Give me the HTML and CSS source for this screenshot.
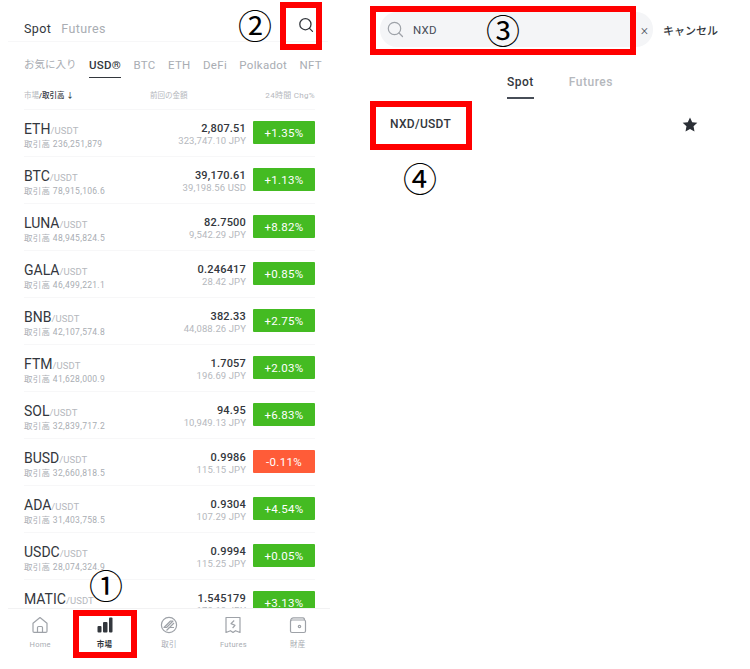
FILE: index.html
```html
<!DOCTYPE html>
<html lang="ja">
<head>
    <meta charset="UTF-8">
    <meta name="viewport" content="width=device-width, initial-scale=1.0">
    <title>NXD/USDT</title>
    <link rel="stylesheet" href="styles.css">
</head>
<body>

<div class="page">
    <!-- left screen: market list -->
    <div class="market">
        <div class="market-top">
            <span class="top-tab active">Spot</span>
            <span class="top-tab">Futures</span>
            <svg class="top-search" width="16" height="16" viewBox="0 0 16 16" fill="none" stroke="#33373d" stroke-width="1.3">
                <circle cx="7.4" cy="7.2" r="5.6"/>
                <path d="M11.5 11.4l3 3" stroke-linecap="round"/>
            </svg>
        </div>

        <div class="cats">
            <span class="fav">お気に入り</span>
            <span class="active">USD®</span>
            <span>BTC</span>
            <span>ETH</span>
            <span>DeFi</span>
            <span>Polkadot</span>
            <span>NFT</span>
        </div>

        <div class="table-head">
            <span class="col-market">市場<b>/取引高 ↓</b></span>
            <span class="col-last">前回の金額</span>
            <span class="col-chg">24時間 Chg%</span>
        </div>

        <div class="rows">
            <div class="row">
                <div class="pair"><div class="name">ETH<small>/USDT</small></div><div class="vol">取引高 236,251,879</div></div>
                <div class="price"><div class="last">2,807.51</div><div class="conv">323,747.10 JPY</div></div>
                <div class="chg">+1.35%</div>
            </div>
            <div class="row">
                <div class="pair"><div class="name">BTC<small>/USDT</small></div><div class="vol">取引高 78,915,106.6</div></div>
                <div class="price"><div class="last">39,170.61</div><div class="conv">39,198.56 USD</div></div>
                <div class="chg">+1.13%</div>
            </div>
            <div class="row">
                <div class="pair"><div class="name">LUNA<small>/USDT</small></div><div class="vol">取引高 48,945,824.5</div></div>
                <div class="price"><div class="last">82.7500</div><div class="conv">9,542.29 JPY</div></div>
                <div class="chg">+8.82%</div>
            </div>
            <div class="row">
                <div class="pair"><div class="name">GALA<small>/USDT</small></div><div class="vol">取引高 46,499,221.1</div></div>
                <div class="price"><div class="last">0.246417</div><div class="conv">28.42 JPY</div></div>
                <div class="chg">+0.85%</div>
            </div>
            <div class="row">
                <div class="pair"><div class="name">BNB<small>/USDT</small></div><div class="vol">取引高 42,107,574.8</div></div>
                <div class="price"><div class="last">382.33</div><div class="conv">44,088.26 JPY</div></div>
                <div class="chg">+2.75%</div>
            </div>
            <div class="row">
                <div class="pair"><div class="name">FTM<small>/USDT</small></div><div class="vol">取引高 41,628,000.9</div></div>
                <div class="price"><div class="last">1.7057</div><div class="conv">196.69 JPY</div></div>
                <div class="chg">+2.03%</div>
            </div>
            <div class="row">
                <div class="pair"><div class="name">SOL<small>/USDT</small></div><div class="vol">取引高 32,839,717.2</div></div>
                <div class="price"><div class="last">94.95</div><div class="conv">10,949.13 JPY</div></div>
                <div class="chg">+6.83%</div>
            </div>
            <div class="row">
                <div class="pair"><div class="name">BUSD<small>/USDT</small></div><div class="vol">取引高 32,660,818.5</div></div>
                <div class="price"><div class="last">0.9986</div><div class="conv">115.15 JPY</div></div>
                <div class="chg down">-0.11%</div>
            </div>
            <div class="row">
                <div class="pair"><div class="name">ADA<small>/USDT</small></div><div class="vol">取引高 31,403,758.5</div></div>
                <div class="price"><div class="last">0.9304</div><div class="conv">107.29 JPY</div></div>
                <div class="chg">+4.54%</div>
            </div>
            <div class="row">
                <div class="pair"><div class="name">USDC<small>/USDT</small></div><div class="vol">取引高 28,074,324.9</div></div>
                <div class="price"><div class="last">0.9994</div><div class="conv">115.25 JPY</div></div>
                <div class="chg">+0.05%</div>
            </div>
            <div class="row">
                <div class="pair"><div class="name">MATIC<small>/USDT</small></div><div class="vol">取引高 19,115,421.1</div></div>
                <div class="price"><div class="last">1.545179</div><div class="conv">178.18 JPY</div></div>
                <div class="chg">+3.13%</div>
            </div>
        </div>

        <div class="bottom-nav">
            <div class="nav-item">
                <svg width="18" height="18" viewBox="0 0 18 18" fill="none" stroke="#9ea2a8" stroke-width="1.2" stroke-linejoin="round">
                    <path d="M2 7.2L9 1.500l7 5.700v8a1.200 1.200 0 0 1-1.200 1.200H3.200A1.200 1.200 0 0 1 2 15.200z"/>
                    <path d="M6.500 16.400v-4.900a1 1 0 0 1 1-1h3a1 1 0 0 1 1 1v4.900"/>
                </svg>
                <span>Home</span>
            </div>
            <div class="nav-item active">
                <svg width="18" height="18" viewBox="0 0 18 18" fill="#33373d">
                    <rect x="1.500" y="10" width="4" height="6.500" rx="1"/>
                    <rect x="7" y="6" width="4.500" height="10.500" rx="1"/>
                    <rect x="13" y="1.500" width="3.500" height="15" rx="1"/>
                </svg>
                <span>市場</span>
            </div>
            <div class="nav-item">
                <svg width="18" height="18" viewBox="0 0 18 18" fill="none" stroke="#9ea2a8" stroke-width="1.200">
                    <circle cx="9" cy="9" r="7.600"/>
                    <path d="M4 11.500L10.500 5H13L6.500 11.500zM6.500 14.500l7.500-7.500M8.500 11.500H14" stroke-linejoin="round"/>
                </svg>
                <span>取引</span>
            </div>
            <div class="nav-item">
                <svg width="18" height="18" viewBox="0 0 18 18" fill="none" stroke="#9ea2a8" stroke-width="1.200" stroke-linejoin="round">
                    <path d="M2 1.500h14v15l-4.500-1.800L9 16.500l-2.500-1.800L2 16.500z"/>
                    <path d="M10.200 4.500L7 7.600l4 1.700-2.400 2.700"/>
                </svg>
                <span>Futures</span>
            </div>
            <div class="nav-item">
                <svg width="18" height="18" viewBox="0 0 18 18" fill="none" stroke="#9ea2a8" stroke-width="1.200" stroke-linejoin="round">
                    <rect x="1.500" y="4" width="15" height="12.500" rx="1.500"/>
                    <path d="M1.500 5.500C1.500 3 3 1.800 4.500 1.800h9.500c1 0 1.500.8 1.500 2.200"/>
                    <circle cx="10.500" cy="10.500" r="1.200"/>
                </svg>
                <span>財産</span>
            </div>
        </div>
    </div>

    <!-- right screen: search result -->
    <div class="search">
        <div class="search-top">
            <div class="search-box">
                <svg width="17" height="17" viewBox="0 0 17 17" fill="none" stroke="#9ea2a8" stroke-width="1.2">
                    <circle cx="7.500" cy="7.500" r="6.200"/>
                    <path d="M12 12l3.500 3.500" stroke-linecap="round"/>
                </svg>
                <span class="query">NXD</span>
                <span class="clear">×</span>
            </div>
            <span class="cancel">キャンセル</span>
        </div>
        <div class="search-tabs">
            <span class="active">Spot</span>
            <span>Futures</span>
        </div>
        <div class="result">
            <span class="result-name">NXD/USDT</span>
            <svg width="16" height="15" viewBox="0 0 18 17" fill="#2b2f36">
                <path d="M9 .6l2.500 5.300 5.800.7-4.300 4 1.100 5.700L9 13.500l-5.100 2.800L5 10.600.7 6.600l5.800-.7z"/>
            </svg>
        </div>
    </div>

    <!-- annotations drawn over the screenshots -->
    <div class="mark mark-nav"></div>
    <div class="mark mark-icon"></div>
    <div class="mark mark-box"></div>
    <div class="mark mark-result"></div>
    <div class="num num-1">①</div>
    <div class="num num-2">②</div>
    <div class="num num-3">③</div>
    <div class="num num-4">④</div>
</div>

</body>
</html>
```

FILE: styles.css
```css
* {
    box-sizing: border-box;
}

body {
    margin: 0;
    background-color: #fff;
    font-family: Roboto, "Noto Sans CJK JP", sans-serif;
    color: #2b2f36;
}

.page {
    position: relative;
    display: flex;
    width: 750px;
    height: 669px;
    overflow: hidden;
}

/* Left screen */
.market {
    display: flex;
    flex-direction: column;
    width: 330px;
    height: 660px;
}

.market-top {
    display: flex;
    align-items: center;
    gap: 10px;
    height: 42px;
    margin: 0 2px 0 8px;
    padding: 16px 14px 0 16px;
    border-bottom: 1px solid #f7f7f8;
    flex-shrink: 0;
}

.top-tab {
    font-size: 12.500px;
    letter-spacing: .4px;
    color: #a9adb3;
}

.top-tab.active {
    color: #33373d;
}

.top-search {
    margin: -8px 0 0 auto;
}

.cats {
    display: flex;
    justify-content: space-between;
    height: 30px;
    margin-top: 13px;
    padding: 0 8px 0 24px;
    font-size: 11.500px;
    letter-spacing: .3px;
    color: #a9adb3;
    flex-shrink: 0;
}

.cats span {
    height: 23px;
    line-height: 20px;
}

.cats .fav {
    font-size: 10.500px;
    letter-spacing: 0;
}

.cats .active {
    font-weight: 500;
    color: #33373d;
    border-bottom: 1px solid #33373d;
}

.table-head {
    display: flex;
    align-items: center;
    height: 25px;
    margin: 0 15px 0 24px;
    padding-bottom: 5px;
    font-size: 7.500px;
    color: #b5b8bd;
    border-bottom: 1px solid #f7f7f8;
    flex-shrink: 0;
}

.table-head b {
    font-weight: 500;
    color: #33373d;
}

.col-market {
    width: 126px;
}

.col-last {
    width: 105px;
}

.col-chg {
    margin-left: auto;
    font-size: 8px;
    letter-spacing: .3px;
}

.rows {
    flex: 1;
    min-height: 0;
    overflow: hidden;
    padding: 0 15px 0 24px;
}

.row {
    display: flex;
    align-items: center;
    height: 47px;
    border-bottom: 1px solid #f7f7f8;
}

.pair {
    flex: 1;
    padding-top: 6px;
}

.name {
    font-size: 14px;
    line-height: 15px;
    color: #33373d;
}

.name small {
    font-size: 9.500px;
    letter-spacing: .1px;
    color: #b5b8bd;
}

.vol {
    font-size: 8.500px;
    line-height: 12px;
    letter-spacing: .3px;
    color: #a9adb3;
}

.price {
    margin-right: 7px;
    padding-top: 3px;
    text-align: right;
}

.last {
    font-size: 11px;
    line-height: 13px;
    font-weight: 500;
    letter-spacing: .2px;
    color: #33373d;
}

.conv {
    font-size: 9.500px;
    line-height: 12px;
    letter-spacing: .1px;
    color: #b5b8bd;
}

.chg {
    width: 62px;
    height: 23px;
    margin-bottom: 1px;
    border-radius: 1px;
    background-color: #44bb22;
    font-size: 11.500px;
    line-height: 24px;
    letter-spacing: .3px;
    text-align: center;
    color: #fff;
}

.chg.down {
    background-color: #ff5c38;
}

.bottom-nav {
    display: flex;
    height: 52px;
    margin-left: 8px;
    background-color: #fff;
    border-top: 1px solid #f2f2f3;
    flex-shrink: 0;
}

.nav-item {
    display: flex;
    flex-direction: column;
    align-items: center;
    gap: 6px;
    flex: 1;
    padding-top: 7px;
    font-size: 7.500px;
    line-height: 10px;
    letter-spacing: .25px;
    color: #a9adb3;
}

.nav-item svg {
    display: block;
}

.nav-item.active {
    font-weight: 700;
    color: #33373d;
}

/* Right screen */
.search {
    flex: 1;
    padding: 12px 32px 0 50px;
}

.search-top {
    display: flex;
    align-items: center;
    gap: 10px;
    height: 35px;
}

.search-box {
    display: flex;
    align-items: center;
    width: 273px;
    height: 35px;
    padding: 0 5px 0 7px;
    border-radius: 17px;
    background-color: #f4f5f7;
    flex-shrink: 0;
}

.query {
    margin-left: 9px;
    font-size: 11.500px;
    letter-spacing: .3px;
    color: #474d57;
}

.clear {
    margin-left: auto;
    font-size: 14px;
    font-weight: 300;
    color: #474d57;
}

.cancel {
    font-size: 11px;
    font-weight: 500;
    white-space: nowrap;
    color: #33373d;
}

.search-tabs {
    display: flex;
    gap: 35px;
    height: 41px;
    margin: 15px 0 0 127px;
    font-size: 12px;
    font-weight: 500;
    letter-spacing: .5px;
    color: #b5b8bd;
}

.search-tabs span {
    height: 37px;
    line-height: 41px;
}

.search-tabs span.active {
    color: #33373d;
    border-bottom: 2px solid #474d57;
}

.result {
    display: flex;
    align-items: center;
    justify-content: space-between;
    height: 38px;
    margin: 2px 0 0 10px;
    padding-right: 20px;
}

.result-name {
    font-size: 12px;
    font-weight: 500;
    letter-spacing: .3px;
    color: #33373d;
}

/* Annotations */
.mark {
    position: absolute;
    border: 6px solid #ff0000;
}

.mark-nav {
    left: 73px;
    top: 610px;
    width: 64px;
    height: 48px;
}

.mark-icon {
    left: 280px;
    top: 2px;
    width: 42px;
    height: 48px;
}

.mark-box {
    left: 370px;
    top: 6px;
    width: 266px;
    height: 49px;
}

.mark-result {
    left: 370px;
    top: 101px;
    width: 102px;
    height: 49px;
}

.num {
    position: absolute;
    width: 40px;
    margin-left: -20px;
    font-family: "Noto Sans CJK JP", sans-serif;
    font-size: 34px;
    line-height: 40px;
    text-align: center;
    color: #000;
}

.num-1 { left: 106px; top: 565px; }
.num-2 { left: 255px; top: 5px; }
.num-3 { left: 503px; top: 10px; }
.num-4 { left: 420px; top: 158px; }
```
